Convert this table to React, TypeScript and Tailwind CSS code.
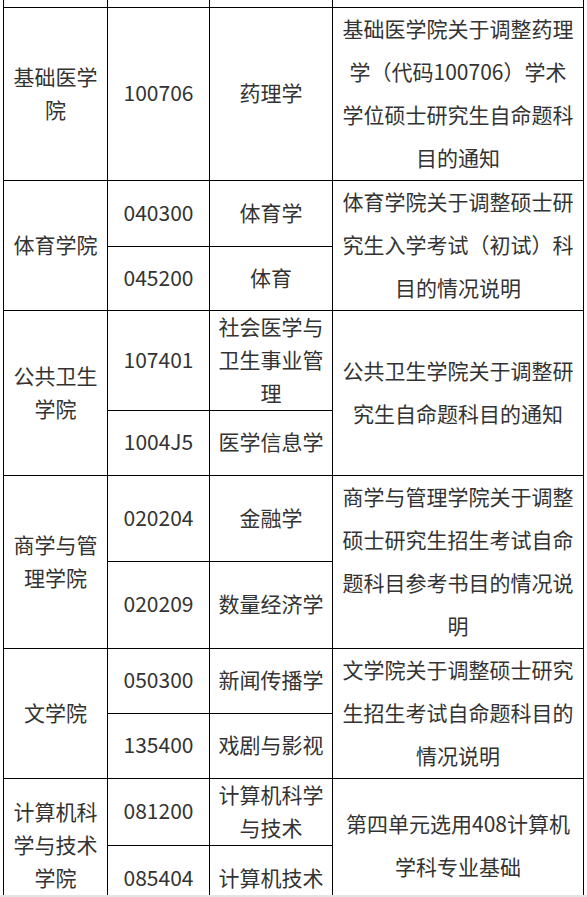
import React from "react";

type Sub = { code: string; major: string[]; h?: number };
type Group = {
  h: number;
  school: string[];
  subs: Sub[];
  desc: string[];
};

const groups: Group[] = [
  {
    h: 173,
    school: ["基础医学", "院"],
    subs: [{ code: "100706", major: ["药理学"] }],
    desc: ["基础医学院关于调整药理", "学（代码100706）学术", "学位硕士研究生自命题科", "目的通知"],
  },
  {
    h: 130,
    school: ["体育学院"],
    subs: [
      { code: "040300", major: ["体育学"], h: 66 },
      { code: "045200", major: ["体育"] },
    ],
    desc: ["体育学院关于调整硕士研", "究生入学考试（初试）科", "目的情况说明"],
  },
  {
    h: 165,
    school: ["公共卫生", "学院"],
    subs: [
      { code: "107401", major: ["社会医学与", "卫生事业管", "理"], h: 100 },
      { code: "1004J5", major: ["医学信息学"] },
    ],
    desc: ["公共卫生学院关于调整研", "究生自命题科目的通知"],
  },
  {
    h: 173,
    school: ["商学与管", "理学院"],
    subs: [
      { code: "020204", major: ["金融学"], h: 86 },
      { code: "020209", major: ["数量经济学"] },
    ],
    desc: ["商学与管理学院关于调整", "硕士研究生招生考试自命", "题科目参考书目的情况说", "明"],
  },
  {
    h: 130,
    school: ["文学院"],
    subs: [
      { code: "050300", major: ["新闻传播学"], h: 65 },
      { code: "135400", major: ["戏剧与影视"] },
    ],
    desc: ["文学院关于调整硕士研究", "生招生考试自命题科目的", "情况说明"],
  },
  {
    h: 134,
    school: ["计算机科", "学与技术", "学院"],
    subs: [
      { code: "081200", major: ["计算机科学", "与技术"], h: 67 },
      { code: "085404", major: ["计算机技术"] },
    ],
    desc: ["第四单元选用408计算机", "学科专业基础"],
  },
];

function Lines({ lines, lh }: { lines: string[]; lh: "short" | "tall" }) {
  return (
    <div className={lh === "tall" ? "leading-[43px]" : "leading-[33px]"}>
      {lines.map((l, i) => (
        <div key={i} className="whitespace-nowrap">
          {l}
        </div>
      ))}
    </div>
  );
}

export default function App() {
  return (
    <div
      className="h-[897px] w-[587px] overflow-hidden bg-white flex flex-col text-[21px] text-[#333333]"
      style={{ fontFamily: '"Noto Sans CJK SC", "Noto Sans", sans-serif' }}
    >
      <div className="flex-1 overflow-hidden">
        <div className="ml-[3px] w-[581px] border-l border-r border-black">
          <div className="flex h-[8px] border-b border-black">
            <div className="w-[104px] border-r border-black" />
            <div className="w-[102px] border-r border-black" />
            <div className="w-[123px] border-r border-black" />
            <div className="flex-1" />
          </div>
          {groups.map((g, gi) => (
            <div
              key={gi}
              className="flex border-b border-black"
              style={{ height: g.h }}
            >
              <div className="w-[104px] shrink-0 border-r border-black flex items-center justify-center text-center pb-[3px]">
                <Lines lines={g.school} lh="short" />
              </div>
              <div className="w-[225px] shrink-0 border-r border-black flex flex-col">
                {g.subs.map((s, si) => {
                  const last = si === g.subs.length - 1;
                  return (
                    <div
                      key={si}
                      className={
                        "flex " + (last ? "flex-1" : "shrink-0 border-b border-black")
                      }
                      style={last ? undefined : { height: s.h }}
                    >
                      <div className="w-[102px] shrink-0 border-r border-black flex items-center justify-center leading-[33px] pb-[3px]">
                        {s.code}
                      </div>
                      <div className="flex-1 flex items-center justify-center text-center pb-[3px]">
                        <Lines lines={s.major} lh="short" />
                      </div>
                    </div>
                  );
                })}
              </div>
              <div className="flex-1 flex items-center justify-center text-center pb-[2px]">
                <Lines lines={g.desc} lh="tall" />
              </div>
            </div>
          ))}
        </div>
      </div>
      <div className="h-[2px] shrink-0 bg-[#e4e4e4]" />
    </div>
  );
}
